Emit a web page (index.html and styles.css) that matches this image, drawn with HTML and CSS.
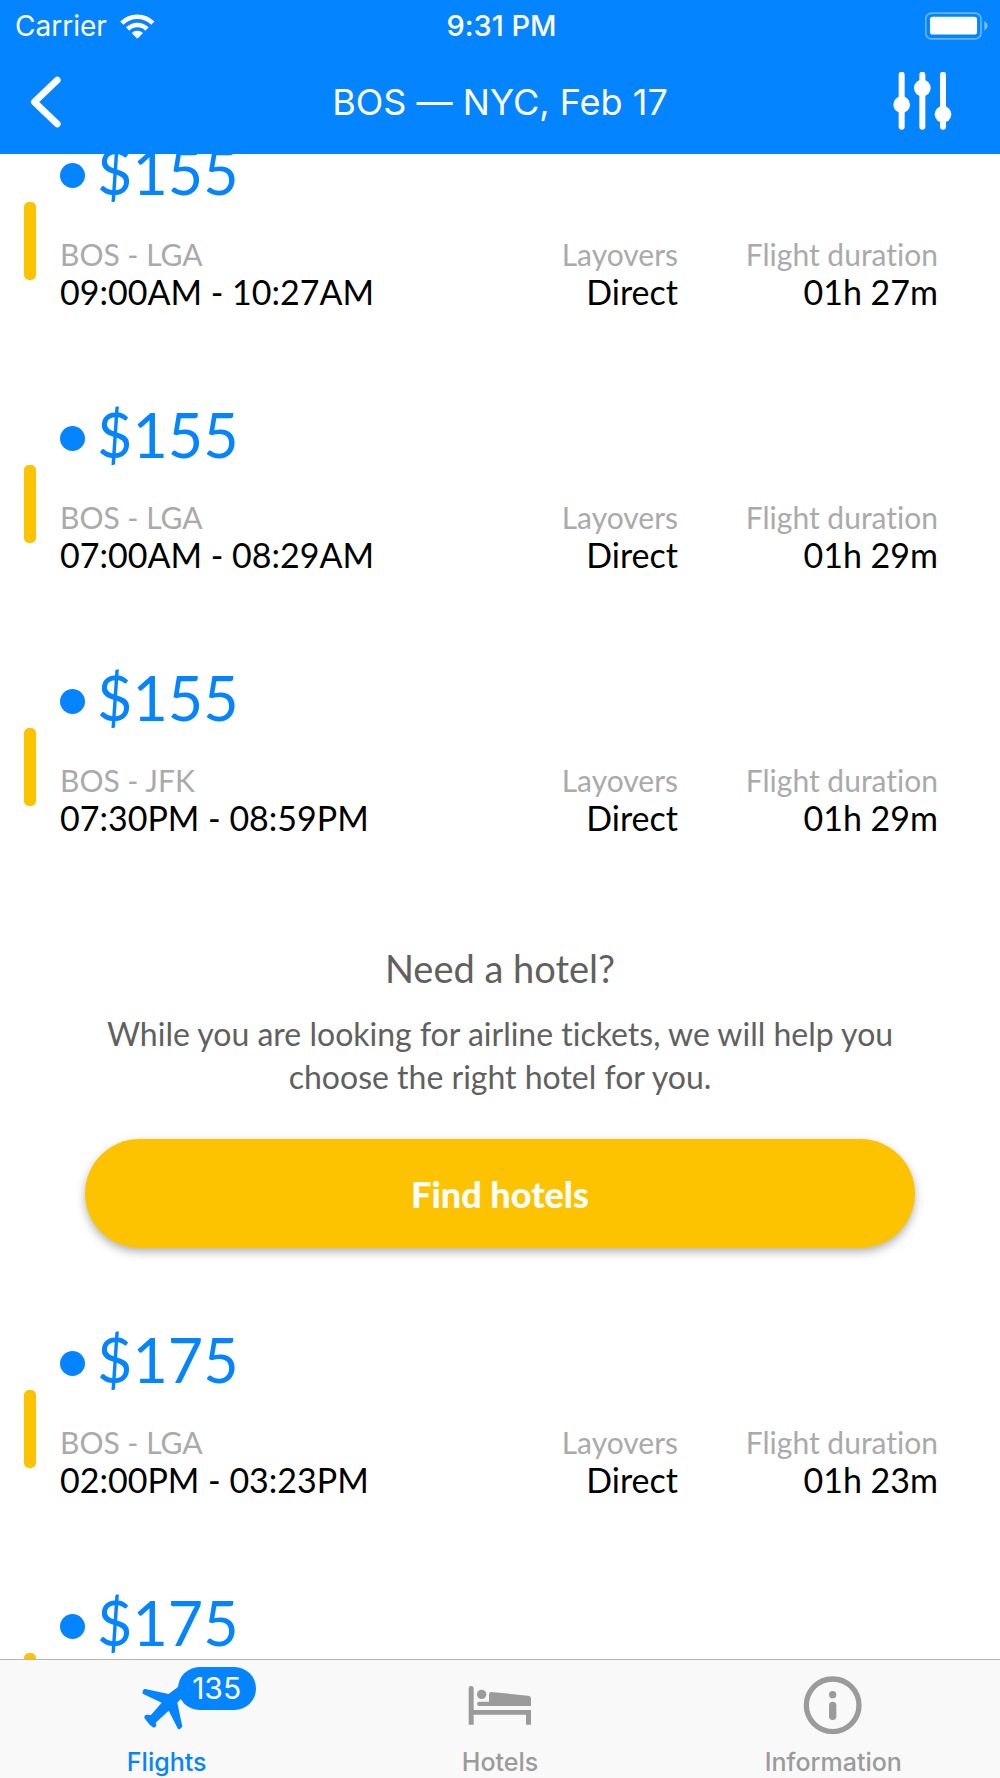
FILE: index.html
```html
<!DOCTYPE html>
<html lang="en">
<head>
<meta charset="utf-8">
<meta name="viewport" content="width=device-width, initial-scale=1">
<title>BOS — NYC, Feb 17</title>
<link rel="stylesheet" href="styles.css">
</head>
<body>
<div class="app">
  <header class="header">
    <div class="status">
      <div class="status-left">
        <span>Carrier</span>
        <svg width="36" height="28" viewBox="358 30 108 84" aria-hidden="true">
          <g fill="none" stroke="#fff" stroke-width="14">
            <path d="M366.5 63.5A66 66 0 0 1 459.500 63.500"/>
            <path d="M384 81A41 41 0 0 1 442 81"/>
          </g>
          <path d="M396 93A24 24 0 0 1 430 93L416 107Q413 110 410 107Z" fill="#fff"/>
        </svg>
      </div>
      <span class="status-time">9:31 PM</span>
      <svg class="battery" width="63" height="28" viewBox="1275 31 190 84" aria-hidden="true">
        <rect x="1277" y="34" width="167" height="78" rx="18" fill="none" stroke="#fff" stroke-opacity=".4" stroke-width="5"/>
        <rect x="1290" y="45" width="142" height="54" rx="8" fill="#fff"/>
        <path d="M1454 58Q1464 64 1464 72.500T1454 87Z" fill="#fff" fill-opacity=".5"/>
      </svg>
    </div>
    <nav class="nav">
      <button class="icon-button" type="button" aria-label="Back">
        <svg width="40" height="60" viewBox="78 216 120 180" aria-hidden="true"><path d="M172 240L103 306L172 372" fill="none" stroke="#fff" stroke-width="20" stroke-linecap="round" stroke-linejoin="round"/></svg>
      </button>
      <h1 class="title">BOS — NYC, Feb 17</h1>
      <button class="icon-button icon-button-filters" type="button" aria-label="Filters">
        <svg width="66" height="60" viewBox="1170 215 198 180" aria-hidden="true">
          <path d="M1205 223V379M1267 223V379M1329 223V379" stroke="#fff" stroke-width="18" stroke-linecap="round"/>
          <g fill="#fff"><circle cx="1205" cy="313" r="25"/><circle cx="1267" cy="263" r="25"/><circle cx="1329" cy="342" r="25"/></g>
        </svg>
      </button>
    </nav>
  </header>

  <main class="results">
    <article class="flight">
      <div class="flight-body">
        <h2 class="price">$155</h2>
        <dl class="details">
          <div><dt>BOS - LGA</dt><dd>09:00AM - 10:27AM</dd></div>
          <div><dt>Layovers</dt><dd>Direct</dd></div>
          <div><dt>Flight duration</dt><dd>01h 27m</dd></div>
        </dl>
      </div>
    </article>
    <article class="flight">
      <div class="flight-body">
        <h2 class="price">$155</h2>
        <dl class="details">
          <div><dt>BOS - LGA</dt><dd>07:00AM - 08:29AM</dd></div>
          <div><dt>Layovers</dt><dd>Direct</dd></div>
          <div><dt>Flight duration</dt><dd>01h 29m</dd></div>
        </dl>
      </div>
    </article>
    <article class="flight">
      <div class="flight-body">
        <h2 class="price">$155</h2>
        <dl class="details">
          <div><dt>BOS - JFK</dt><dd>07:30PM - 08:59PM</dd></div>
          <div><dt>Layovers</dt><dd>Direct</dd></div>
          <div><dt>Flight duration</dt><dd>01h 29m</dd></div>
        </dl>
      </div>
    </article>
    <section class="promo">
      <h2 class="promo-title">Need a hotel?</h2>
      <p class="promo-text">While you are looking for airline tickets, we will help you choose the right hotel for you.</p>
      <button class="promo-button" type="button">Find hotels</button>
    </section>
    <article class="flight">
      <div class="flight-body">
        <h2 class="price">$175</h2>
        <dl class="details">
          <div><dt>BOS - LGA</dt><dd>02:00PM - 03:23PM</dd></div>
          <div><dt>Layovers</dt><dd>Direct</dd></div>
          <div><dt>Flight duration</dt><dd>01h 23m</dd></div>
        </dl>
      </div>
    </article>
    <article class="flight">
      <div class="flight-body">
        <h2 class="price">$175</h2>
      </div>
    </article>
  </main>

  <nav class="tabs">
    <a class="tab tab-active" href="#flights">
      <svg width="66" height="60" viewBox="401 285 198 180" aria-hidden="true"><path fill="currentColor" d="M426 340L429 329Q431 326 435 327L505 342L530 323L560 290L575 310L545 353L531 368L546 440L538 448Q534 449 532 445L505 392L466 428L468 435Q468 441 460 443L448 434L432 414Q431 405 440 404L452 405L484 368L430 343Z"/></svg>
      <span class="badge">135</span>
      <span>Flights</span>
    </a>
    <a class="tab" href="#hotels">
      <svg width="66" height="60" viewBox="201 105 198 180" aria-hidden="true"><g fill="currentColor"><path d="M206 254V145Q206 138 213 138T221 145V210H393V254H378V224H221V254Z"/><circle cx="245" cy="163" r="14"/><path d="M267 185V163Q267 156 274 156L384 167Q393 168 393 176V198H238Q231 198 231 191.500T238 185Z"/></g></svg>
      <span>Hotels</span>
    </a>
    <a class="tab" href="#information">
      <svg width="66" height="60" viewBox="179 105 198 180" aria-hidden="true"><circle cx="277" cy="196" r="79" fill="none" stroke="currentColor" stroke-width="16"/><circle cx="277" cy="164" r="11" fill="currentColor"/><rect x="266" y="185" width="22" height="55" rx="11" fill="currentColor"/></svg>
      <span>Information</span>
    </a>
  </nav>
</div>
</body>
</html>
```
FILE: styles.css
```css
* {
  box-sizing: border-box;
  margin: 0;
}

body {
  background: #fff;
  font-family: Lato, "Open Sans", sans-serif;
  font-variant-ligatures: none;
  color: #000;
}

.app {
  display: flex;
  flex-direction: column;
  height: 100vh;
}

/* Status bar and navigation */
.header {
  background: #0584ff;
  color: #fff;
  font-family: Inter, "Liberation Sans", sans-serif;
}

.status,
.nav {
  display: grid;
  grid-template-columns: 1fr auto 1fr;
  align-items: center;
}

.status {
  height: 50px;
  padding: 0 12px 0 15px;
  font-size: 28px;
  line-height: 52px;
}

.status-left {
  display: flex;
  align-items: center;
  gap: 12px;
}

.status-time {
  font-size: 29px;
  font-weight: 500;
}

.battery {
  justify-self: end;
}

.nav {
  height: 104px;
  padding: 0 26px;
}

.icon-button {
  display: flex;
  padding: 0;
  border: 0;
  background: none;
}

.icon-button-filters {
  justify-self: end;
  margin-right: 18px;
}

.title {
  font-size: 36px;
  font-weight: 400;
  line-height: 44px;
}

/* Results list, scrolled part-way into its first card */
.results {
  flex: 1;
  min-height: 0;
  overflow: hidden;
}

.flight {
  display: flex;
  align-items: center;
  gap: 24px;
  height: 263px;
  padding: 0 62px 0 24px;
}

.flight:first-child {
  margin-top: -45px;
}

.flight::before {
  content: "";
  width: 12px;
  height: 78px;
  border-radius: 5px;
  background: #fdc300;
}

.flight-body {
  flex: 1;
  height: 192px;
}

.price {
  display: flex;
  align-items: flex-start;
  gap: 12px;
  height: 60px;
  margin-bottom: 30px;
  color: #0584ff;
  font-size: 61px;
  font-weight: 400;
  line-height: 54px;
}

.price::before {
  content: "";
  width: 25px;
  height: 25px;
  margin-top: 18px;
  border-radius: 50%;
  background: #0584ff;
}

.details {
  display: grid;
  grid-template-columns: 1fr 200px 200px;
  gap: 60px;
  line-height: 38px;
}

.details div + div {
  text-align: right;
}

.details dt {
  color: #aaa;
  font-size: 30px;
}

.details dd {
  margin: 0;
  font-size: 34px;
}

/* Hotel promo */
.promo {
  padding: 48px 85px 49px;
  color: #606060;
  text-align: center;
}

.promo-title {
  margin-bottom: 22px;
  font-size: 38px;
  font-weight: 400;
  line-height: 44px;
}

.promo-text {
  margin-bottom: 41px;
  font-size: 32px;
  line-height: 43px;
}

.promo-button {
  display: block;
  width: 100%;
  height: 109px;
  border: 0;
  border-radius: 55px;
  background: #fdc300;
  box-shadow: 0 4px 10px rgba(0, 0, 0, 0.3);
  color: #fff;
  font: 900 36px/40px Lato, "Open Sans", sans-serif;
}

/* Tab bar */
.tabs {
  display: grid;
  grid-template-columns: repeat(3, 1fr);
  height: 119px;
  border-top: 1px solid #b4b4b4;
  background: #f9f9f9;
  font-family: Inter, "Liberation Sans", sans-serif;
}

.tab {
  position: relative;
  display: flex;
  flex-direction: column;
  align-items: center;
  gap: 12px;
  padding-top: 15px;
  color: #9b9b9b;
  font-size: 25px;
  font-weight: 500;
  line-height: 30px;
  text-decoration: none;
}

.tab-active {
  color: #0584ff;
}

.badge {
  position: absolute;
  top: 7px;
  left: calc(50% + 11px);
  width: 78px;
  border-radius: 22px;
  background: #0584ff;
  color: #fff;
  font-size: 30px;
  font-weight: 400;
  line-height: 43px;
  text-align: center;
}
```
